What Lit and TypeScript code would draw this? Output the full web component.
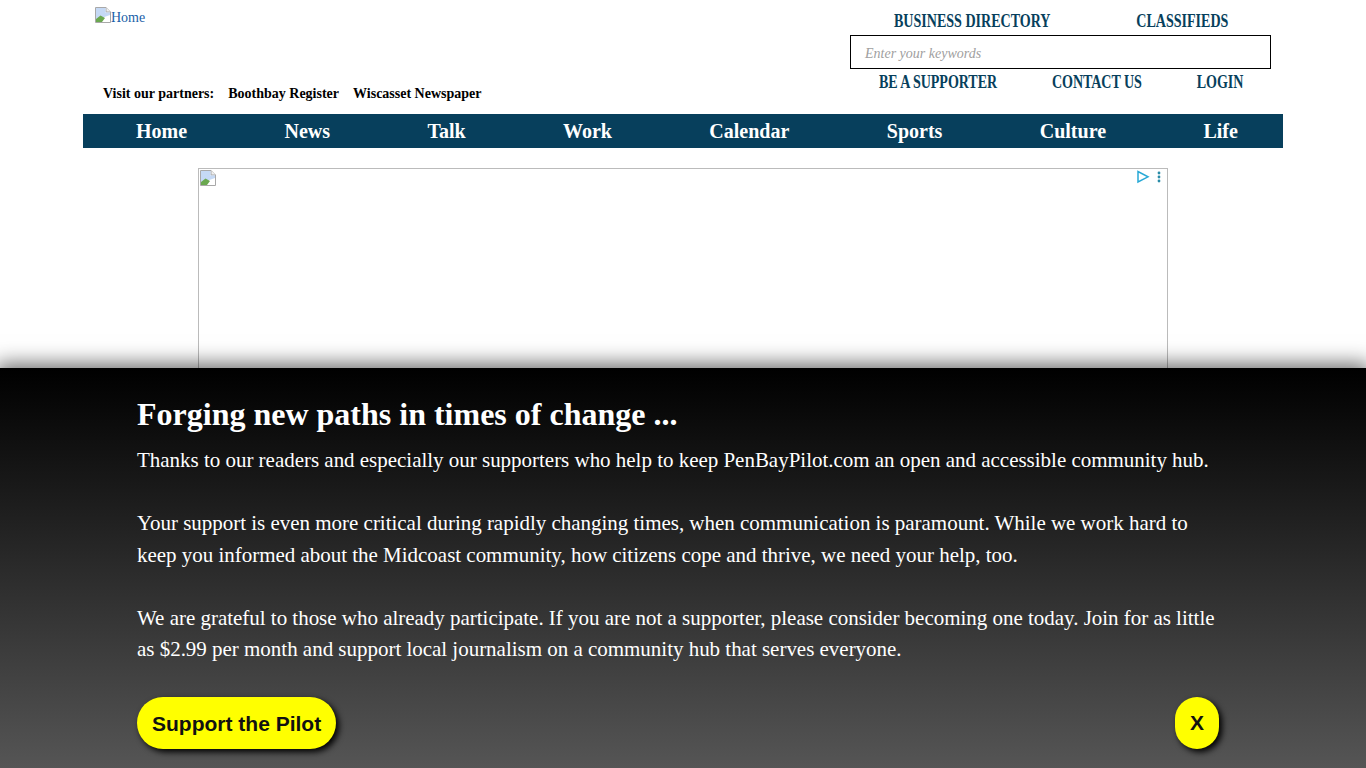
import {LitElement, html, css} from 'lit';
import {customElement} from 'lit/decorators.js';

const NAV_ITEMS = ['Home', 'News', 'Talk', 'Work', 'Calendar', 'Sports', 'Culture', 'Life'];

const brokenImage = html`<svg class="broken" width="16" height="16" viewBox="0 0 16 16">
  <path d="M.5 .5H11L15.5 5V15.5H.5Z" fill="#fff" stroke="#a8a8a8"/>
  <path d="M11 .5V5H15.5" fill="#f0f0f0" stroke="#a8a8a8"/>
  <path d="M1 1H10.5V5.5H15V8L1 13Z" fill="#c5d9f5"/>
  <path d="M1 15V12L5.5 8.5L10 11L7 15Z" fill="#6aa84f"/>
  <path d="M8 15L15 9V15Z" fill="#fff"/>
</svg>`;

@customElement('app-root')
export class AppRoot extends LitElement {
  static override styles = css`
    :host {
      display: block;
      height: 768px;
      overflow: hidden;
      position: relative;
      background: #fff;
      font-family: 'Liberation Serif', 'Times New Roman', serif;
    }
    .page {
      width: 1200px;
      margin: 0 auto;
    }
    .header {
      display: flex;
      justify-content: space-between;
      height: 114px;
    }
    .left {
      width: 500px;
      display: flex;
      flex-direction: column;
      padding: 7px 0 0 12px;
      box-sizing: border-box;
    }
    .logo {
      display: flex;
      align-items: flex-start;
      font-size: 14px;
      line-height: 21px;
      color: #1a5fa8;
      height: 78px;
    }
    .partners {
      display: flex;
      gap: 14px;
      padding-left: 8px;
      font-size: 14px;
      font-weight: bold;
      line-height: 18px;
      color: #000;
    }
    .right {
      width: 421px;
      margin-right: 12px;
      color: #073f5c;
      font-size: 18px;
      font-weight: bold;
    }
    /* the source glyphs are much narrower than Liberation's, so squeeze the row */
    .links {
      display: flex;
      white-space: nowrap;
      line-height: 20px;
      transform: scaleX(0.78);
      transform-origin: left;
    }
    .links.top {
      padding: 11px 0 4px 56.4px;
      gap: 110px;
    }
    .links.bottom {
      padding: 3px 0 0 37.2px;
      gap: 70.5px;
      letter-spacing: -0.08px;
    }
    .search {
      height: 34px;
      box-sizing: border-box;
      border: 1px solid #000;
      padding: 3px 14px 0;
      display: flex;
      align-items: center;
      font-size: 14px;
      font-style: italic;
      font-weight: normal;
      color: #a0a0a0;
    }
    .nav {
      display: flex;
      height: 34px;
      align-items: center;
      background: #073f5c;
      padding: 0 45px 0 53px;
      justify-content: space-between;
      color: #fff;
      font-size: 20px;
      font-weight: bold;
    }
    .ad {
      box-sizing: border-box;
      width: 970px;
      height: 250px;
      margin: 20px auto 0;
      border: 1px solid #bbb;
      position: relative;
    }
    .ad .broken {
      display: block;
      margin: 1px 0 0 1px;
    }
    .adchoice {
      position: absolute;
      top: 1px;
      right: 1px;
    }
    .banner {
      position: absolute;
      left: 0;
      right: 0;
      bottom: 0;
      height: 400px;
      box-sizing: border-box;
      padding: 28px 147px 0 137px;
      background: linear-gradient(#000, #555);
      box-shadow: 0 0 20px 4px rgba(0, 0, 0, 0.6);
      color: #fff;
    }
    h2 {
      margin: 0 0 13px;
      font-size: 32px;
      line-height: 36px;
    }
    p {
      margin: 0 0 31.5px;
      font-size: 21px;
      line-height: 31.5px;
      letter-spacing: -0.02px;
    }
    .actions {
      display: flex;
      justify-content: space-between;
      margin-top: 31px;
    }
    .btn {
      height: 52px;
      box-sizing: border-box;
      padding: 2px 15px 0;
      display: flex;
      align-items: center;
      background: #ffff00;
      color: #111;
      border-radius: 26px;
      font-family: 'Liberation Sans', Arial, sans-serif;
      font-size: 21px;
      font-weight: bold;
      box-shadow: 3px 3px 6px #000;
    }
    .btn.close {
      width: 44px;
      padding: 0;
      justify-content: center;
    }
  `;

  override render() {
    return html`
      <div class="page">
        <div class="header">
          <div class="left">
            <div class="logo">${brokenImage}<span>Home</span></div>
            <div class="partners">
              <span>Visit our partners:</span>
              <span>Boothbay Register</span>
              <span>Wiscasset Newspaper</span>
            </div>
          </div>
          <div class="right">
            <div class="links top"><span>BUSINESS DIRECTORY</span><span>CLASSIFIEDS</span></div>
            <div class="search">Enter your keywords</div>
            <div class="links bottom"><span>BE A SUPPORTER</span><span>CONTACT US</span><span>LOGIN</span></div>
          </div>
        </div>
        <div class="nav">${NAV_ITEMS.map((item) => html`<span>${item}</span>`)}</div>
        <div class="ad">
          ${brokenImage}
          <svg class="adchoice" width="30" height="15" viewBox="0 0 30 15">
            <path d="M2 1.5V12L12 6.8Z" fill="none" stroke="#28a9d6" stroke-width="1.5"/>
            <circle cx="23" cy="3" r="1.4" fill="#2a8ca8"/>
            <circle cx="23" cy="7" r="1.4" fill="#2a8ca8"/>
            <circle cx="23" cy="11" r="1.4" fill="#2a8ca8"/>
          </svg>
        </div>
      </div>
      <div class="banner">
        <h2>Forging new paths in times of change ...</h2>
        <p>Thanks to our readers and especially our supporters who help to keep PenBayPilot.com an open and accessible community hub.</p>
        <p>Your support is even more critical during rapidly changing times, when communication is paramount. While we work hard to keep you informed about the Midcoast community, how citizens cope and thrive, we need your help, too.</p>
        <p>We are grateful to those who already participate. If you are not a supporter, please consider becoming one today. Join for as little as $2.99 per month and support local journalism on a community hub that serves everyone.</p>
        <div class="actions">
          <div class="btn">Support the Pilot</div>
          <div class="btn close">X</div>
        </div>
      </div>
    `;
  }
}

declare global {
  interface HTMLElementTagNameMap {
    'app-root': AppRoot;
  }
}
